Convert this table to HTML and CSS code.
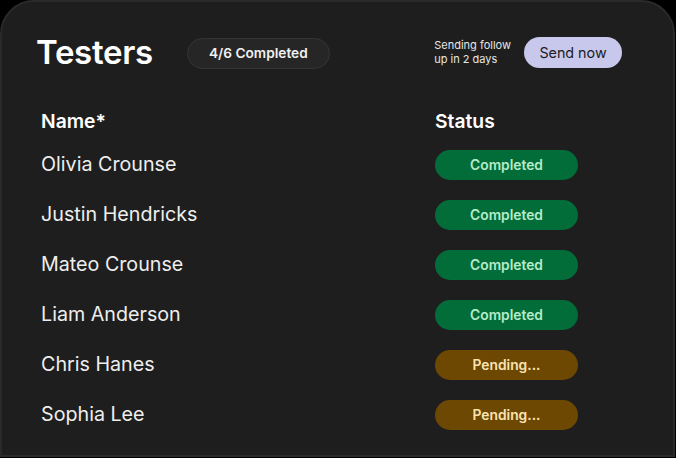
FILE: index.html
```html
<!DOCTYPE html>
<html lang="en">
<head>
<meta charset="utf-8">
<title>Testers</title>
<link rel="stylesheet" href="styles.css">
</head>
<body>
<div class="card">
  <div class="top">
    <div class="top-left">
      <h1 class="title">Testers</h1>
      <span class="badge">4/6 Completed</span>
    </div>
    <div class="top-right">
      <p class="follow">Sending follow<br>up in 2 days</p>
      <button class="send">Send now</button>
    </div>
  </div>
  <div class="table">
    <div class="row head">
      <div class="col-name">Name*</div>
      <div class="col-status">Status</div>
    </div>
    <div class="row">
      <div class="col-name">Olivia Crounse</div>
      <div class="col-status"><span class="pill done">Completed</span></div>
    </div>
    <div class="row">
      <div class="col-name">Justin Hendricks</div>
      <div class="col-status"><span class="pill done">Completed</span></div>
    </div>
    <div class="row">
      <div class="col-name">Mateo Crounse</div>
      <div class="col-status"><span class="pill done">Completed</span></div>
    </div>
    <div class="row">
      <div class="col-name">Liam Anderson</div>
      <div class="col-status"><span class="pill done">Completed</span></div>
    </div>
    <div class="row">
      <div class="col-name">Chris Hanes</div>
      <div class="col-status"><span class="pill pending">Pending...</span></div>
    </div>
    <div class="row">
      <div class="col-name">Sophia Lee</div>
      <div class="col-status"><span class="pill pending">Pending...</span></div>
    </div>
  </div>
</div>
</body>
</html>
```

FILE: styles.css
```css
* { box-sizing: border-box; }
html, body {
  margin: 0;
  padding: 0;
  background: #000;
  width: 676px;
  height: 458px;
  overflow: hidden;
}
body {
  font-family: Inter, "Liberation Sans", sans-serif;
  color: #f2f2f2;
}
.card {
  width: 675px;
  height: 457px;
  background: #1e1e1e;
  border: 2px solid #2a2a2a;
  border-radius: 34px 34px 0 0;
  padding: 34px 51px 0 34px;
}
.top {
  display: flex;
  justify-content: space-between;
  align-items: center;
  height: 32px;
}
.top-left {
  display: flex;
  align-items: center;
  gap: 34px;
}
.title {
  margin: 0;
  font-size: 33px;
  font-weight: 600;
  line-height: 32px;
  color: #ffffff;
  letter-spacing: -0.3px;
}
.badge {
  display: inline-flex;
  align-items: center;
  justify-content: center;
  width: 143px;
  height: 31px;
  margin-top: 2px;
  border-radius: 16px;
  background: #262626;
  border: 1px solid #353535;
  font-size: 13.7px;
  font-weight: 600;
  color: #f0f0f0;
}
.top-right {
  display: flex;
  align-items: center;
  gap: 13px;
}
.follow {
  margin: 0;
  font-size: 11px;
  line-height: 14px;
  color: #e6e6e6;
}
.send {
  width: 98px;
  height: 31px;
  border: none;
  border-radius: 16px;
  background: #c8c8ec;
  color: #1b1b22;
  font-family: Inter, "Liberation Sans", sans-serif;
  font-size: 14.3px;
  padding: 0;
}
.table {
  margin-top: 38px;
  padding-left: 5px;
}
.row {
  display: grid;
  grid-template-columns: 394px auto;
  align-items: center;
  height: 50px;
}
.row.head {
  height: 30px;
  margin-bottom: 4px;
}
.col-name {
  font-size: 19.7px;
  color: #eeeeee;
  padding-bottom: 3px;
}
.row.head .col-name,
.row.head .col-status {
  font-size: 19.3px;
  font-weight: 600;
  color: #ffffff;
  padding-bottom: 0;
}
.pill {
  display: inline-flex;
  align-items: center;
  justify-content: center;
  width: 143px;
  height: 30px;
  border-radius: 15px;
  font-size: 13.8px;
  font-weight: 600;
}
.pill.done {
  background: #036d39;
  color: #b4ecc8;
}
.pill.pending {
  background: #6c4802;
  color: #fbe3b2;
}
```
